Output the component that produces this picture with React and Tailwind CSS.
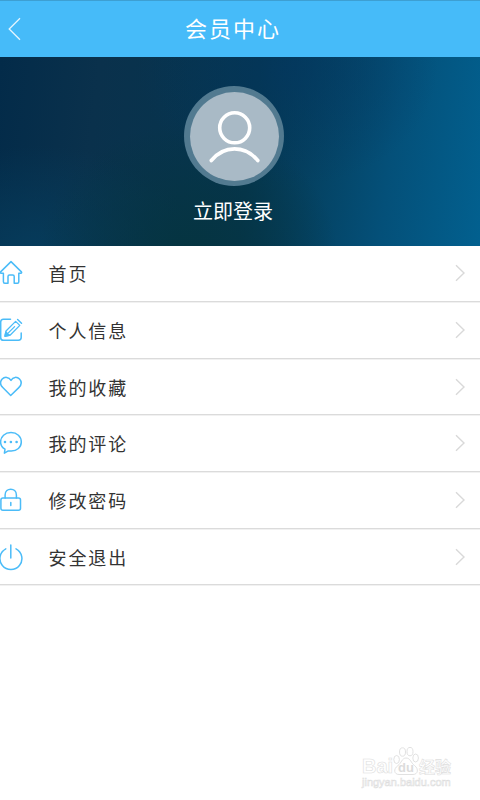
const HomeIcon = () => (
  <>
    <path d="M11 .6 L.6 10.9 Q0 11.9 1 12.3 H3.4 V20.7 Q3.4 22.2 4.8 22.2 H8 V15.6 Q8 14 9.5 14 H12.7 Q14.2 14 14.2 15.6 V22.2 H17.4 Q18.8 22.2 18.8 20.7 V12.3 H21 Q22 11.9 21.4 10.9 Z" />
  </>
)

const EditIcon = () => (
  <>
    <path d="M10.5 1.3 H3.4 Q.7 1.3 .7 4 V19.6 Q.7 22.3 3.4 22.3 H18.4 Q21.2 22.3 21.2 19.6 V15" />
    <path d="M5 18.2 L6 13 L15.6 3.4 L19.8 7.4 L10.3 17 Z M8.6 14.6 L14.6 8.6" strokeWidth="1.3" />
    <path d="M5 18.2 L5.9 14 L9.4 17.2 Z" fill="currentColor" />
    <path d="M17.6 1.5 L21.5 5.2" />
  </>
)

const HeartIcon = () => (
  <path d="M11 5.4 C8.8 1.6 4.5 1.6 2.2 4.1 C-.1 6.6 .3 10 2.8 12.6 L10.7 20.5 L18.8 12.6 C21.5 9.9 21.8 6.6 19.5 4.1 C17.1 1.6 13.1 1.6 11 5.4 Z" />
)

const CommentIcon = () => (
  <>
    <path d="M5 18.2 C2.1 16.6 .6 14.1 .6 11 C.6 5.6 5 1.6 11 1.6 C17 1.6 21.3 5.6 21.3 11 C21.3 16.4 17 20 11.2 20 L8.3 19.9 L4.4 22.1 Z" />
    <path d="M5 11 h.01 M10.9 11 h.01 M16.6 11 h.01" strokeWidth="2.6" />
  </>
)

const LockIcon = () => (
  <>
    <rect x=".9" y="10.1" width="19.6" height="12.2" rx="2" />
    <path d="M5.1 10.1 V7 C5.1 -.8 16.4 -.8 16.4 7 V10.1 M10.8 14.4 V17.5" />
  </>
)

const PowerIcon = () => (
  <path d="M10.8 0 V13 M5.8 3.8 A11 11 0 1 0 16 3.8" />
)

const menu = [
  { label: '首页', Icon: HomeIcon },
  { label: '个人信息', Icon: EditIcon },
  { label: '我的收藏', Icon: HeartIcon },
  { label: '我的评论', Icon: CommentIcon },
  { label: '修改密码', Icon: LockIcon },
  { label: '安全退出', Icon: PowerIcon },
]

function MenuRow({ label, Icon }) {
  return (
    <li className="flex h-[56.67px] items-center border-b border-[#dbdbdb] shadow-[0_1px_0_#f1f1f1]">
      <svg
        className="h-6 w-6 shrink-0 overflow-visible text-[#4bbcf8]"
        viewBox="0 0 24 24"
        fill="none"
        stroke="currentColor"
        strokeWidth="1.5"
        strokeLinecap="round"
        strokeLinejoin="round"
      >
        <Icon />
      </svg>
      <span className="ml-[24.5px] text-[18px] leading-6 tracking-[1.9px] text-[#333]">{label}</span>
      <svg className="mr-3.5 ml-auto h-5 w-3" viewBox="0 0 12 20" fill="none" stroke="#d9d9d9" strokeWidth="1.4">
        <path d="M2 2.2 L10 10 L2 17.8" />
      </svg>
    </li>
  )
}

function Watermark() {
  return (
    <div className="mr-7 mb-[11px] ml-auto w-[90px] font-['Liberation_Sans',sans-serif] text-white [-webkit-text-stroke:0.6px_#dedede]">
      <div className="flex h-[30px] items-end">
        <span className="w-[31px] text-[20px] leading-[20px] font-bold">Bai</span>
        <svg className="h-[30px] w-[26px]" viewBox="0 0 26 30" fill="white" stroke="#dedede" strokeWidth=".9">
          <ellipse cx="3.6" cy="13.5" rx="2.8" ry="4" />
          <ellipse cx="9.5" cy="6" rx="3" ry="4.2" />
          <ellipse cx="17" cy="5.6" rx="3" ry="4.2" />
          <ellipse cx="22.6" cy="12" rx="2.8" ry="4" />
          <path d="M13 12 C9 12 8.5 17 5 19.5 C0 23 1 28.5 6 28.5 H20 C25 28.5 26 23 21.5 19.5 C18 17 17.5 12 13 12 Z" />
          <text x="13" y="25.5" textAnchor="middle" fontSize="13" fill="#dcdcdc" className="[-webkit-text-stroke:0]" stroke="none" fontWeight="bold">du</text>
        </svg>
        <span className="text-[16px] leading-[20px] font-bold whitespace-nowrap font-['Noto_Sans_CJK_SC',sans-serif]">经验</span>
      </div>
      <div className="text-[11px] leading-[13px] whitespace-nowrap">jingyan.baidu.com</div>
    </div>
  )
}

export default function App() {
  return (
    <div className="flex h-[800px] w-[480px] flex-col overflow-hidden bg-white font-['Noto_Sans_CJK_SC',sans-serif]">
      <header className="grid h-[57px] shrink-0 grid-cols-[1fr_auto_1fr] items-center border-t border-[#3d9fd2] bg-[#46bbf9]">
        <svg className="ml-2 h-6 w-4" viewBox="0 0 16 24" fill="none" stroke="#e4f5fe" strokeWidth="1.3">
          <path d="M12 1.2 L1.2 12 L12 22.8" />
        </svg>
        <h1 className="mr-0.5 -ml-3 pb-[5px] text-[22px] leading-8 tracking-[2px] text-white">会员中心</h1>
      </header>

      <section className="flex h-[188.5px] shrink-0 flex-col items-center bg-[radial-gradient(ellipse_150px_130px_at_39%_104%,#053440_0%,#05344000_100%),radial-gradient(ellipse_150px_120px_at_60%_5%,#03366199_0%,#03366100_100%),radial-gradient(ellipse_160px_110px_at_8%_105%,#063c5c_0%,#063c5c00_100%),linear-gradient(97deg,#032b49_0%,#0a314c_20%,#05364f_52%,#045079_80%,#02608f_100%)] pr-3">
        <div className="mt-[29px] flex size-[100px] items-center justify-center rounded-full bg-[#527a90]">
          <div className="size-[89px] rounded-full bg-[#a9bac6]">
            <svg className="size-[89px]" viewBox="0 0 89 89" fill="none" stroke="white" strokeWidth="3.6" strokeLinecap="round">
              <circle cx="44.7" cy="35.8" r="15" />
              <path d="M21.3 68.5 C34 53 55 53 67.8 68.5" />
            </svg>
          </div>
        </div>
        <a className="mt-2.5 mr-0.5 text-[20px] leading-[30px] text-white">立即登录</a>
      </section>

      <ul>
        {menu.map((item) => (
          <MenuRow key={item.label} {...item} />
        ))}
      </ul>

      <div className="mt-auto">
        <Watermark />
      </div>
    </div>
  )
}
